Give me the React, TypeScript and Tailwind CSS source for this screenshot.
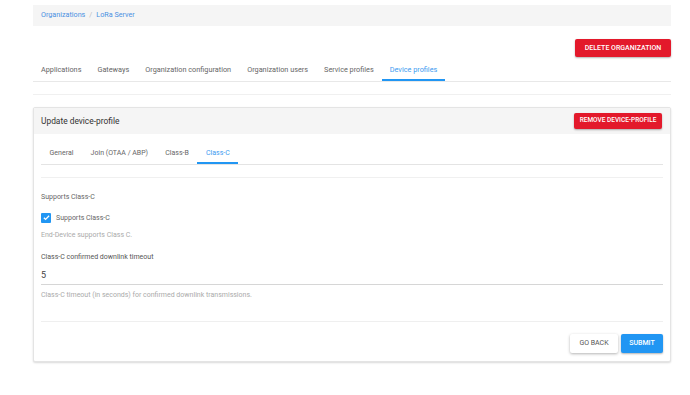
import React from 'react';

const topTabs = [
  'Applications',
  'Gateways',
  'Organization configuration',
  'Organization users',
  'Service profiles',
  'Device profiles',
];

const innerTabs = ['General', 'Join (OTAA / ABP)', 'Class-B', 'Class-C'];

const Tab: React.FC<{ label: string; active?: boolean; px: string }> = ({ label, active, px }) => (
  <div
    className={`${px} h-full flex items-center border-b-2 ${
      active ? 'border-[#2196f3] text-[#3d9bf0]' : 'border-transparent text-[#666]'
    }`}
  >
    {label}
  </div>
);

export default function App() {
  return (
    <div className="min-h-[395px] bg-white font-['Roboto',sans-serif] text-[7px] text-[#555]">
      <div className="ml-[33px] w-[638px] pt-[5px]">
        {/* breadcrumb */}
        <div className="h-[21px] bg-[#f5f5f5] flex items-center px-[8px] text-[7.2px] text-[#4a90e2]">
          <span>Organizations</span>
          <span className="mx-[4px] text-[#bbb]">/</span>
          <span>LoRa Server</span>
        </div>

        <div className="mt-[13px] flex justify-end">
          <button className="h-[18px] w-[96px] bg-[#e3192b] text-white font-medium text-[7px] rounded-[2px] shadow-[0_1px_2px_rgba(0,0,0,0.3)]">
            DELETE ORGANIZATION
          </button>
        </div>

        {/* top tabs */}
        <div className="h-[25px] pt-[4px] flex border-b border-[#e8e8e8] text-[7.3px]">
          {topTabs.map((t) => (
            <Tab key={t} label={t} px="px-[8px]" active={t === 'Device profiles'} />
          ))}
        </div>
        <div className="mt-[12px] border-t border-[#f0f0f0]" />

        {/* card */}
        <div className="mt-[12px] rounded-[2px] border border-[#e4e4e4] shadow-[0_1px_2px_rgba(0,0,0,0.15)] bg-white">
          <div className="h-[26px] bg-[#f5f5f5] flex items-center justify-between pl-[7px] pr-[8px]">
            <span className="text-[8.4px] text-[#333]">Update device-profile</span>
            <button className="h-[16px] w-[88px] bg-[#e3192b] text-white font-medium text-[6.5px] rounded-[2px] shadow-[0_1px_2px_rgba(0,0,0,0.3)]">
              REMOVE DEVICE-PROFILE
            </button>
          </div>

          <div className="px-[7px]">
            <div className="mt-[10px] h-[21px] flex border-b border-[#e4e4e4]">
              {innerTabs.map((t) => (
                <Tab key={t} label={t} px="px-[8.6px]" active={t === 'Class-C'} />
              ))}
            </div>
            <div className="mt-[12px] border-t border-[#f0f0f0]" />

            <div className="mt-[14px] text-[#666]">Supports Class-C</div>

            <div className="mt-[10px] flex items-center">
              <span className="w-[10px] h-[10px] rounded-[1px] bg-[#2196f3] flex items-center justify-center">
                <svg viewBox="0 0 24 24" className="w-[9px] h-[9px]" fill="none" stroke="white" strokeWidth={3.5}>
                  <path d="M5 12.5l4.5 4.5L19 7.5" />
                </svg>
              </span>
              <span className="ml-[5px] text-[#666]">Supports Class-C</span>
            </div>
            <div className="mt-[7px] text-[#aaa]">End-Device supports Class C.</div>

            <div className="mt-[11px] text-[#555]">Class-C confirmed downlink timeout</div>
            <div className="mt-[6px] h-[17px] border-b border-[#d6d6d6] text-[9px] text-[#444] flex items-center">5</div>
            <div className="mt-[5px] text-[#aaa]">Class-C timeout (in seconds) for confirmed downlink transmissions.</div>

            <div className="mt-[20px] border-t border-[#efefef]" />

            <div className="mt-[12px] mb-[8px] flex justify-end gap-[3px]">
              <button className="h-[19px] w-[48px] bg-white text-[#555] text-[7px] rounded-[2px] shadow-[0_1px_3px_rgba(0,0,0,0.3)]">
                GO BACK
              </button>
              <button className="h-[19px] w-[42px] bg-[#2196f3] text-white font-medium text-[7px] rounded-[2px] shadow-[0_1px_2px_rgba(0,0,0,0.3)]">
                SUBMIT
              </button>
            </div>
          </div>
        </div>
      </div>
    </div>
  );
}
